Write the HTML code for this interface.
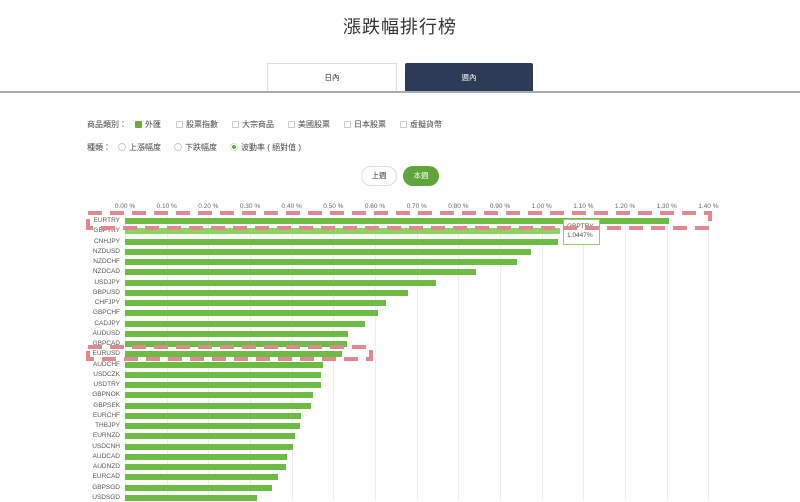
<!DOCTYPE html>
<html><head><meta charset="utf-8"><style>
*{margin:0;padding:0;box-sizing:border-box}
body{width:800px;height:500px;overflow:hidden;background:#fff;position:relative;font-family:"Liberation Sans","Noto Sans CJK TC",sans-serif;color:#444}
.a{position:absolute}
.lbl{position:absolute;left:70px;width:50px;text-align:right;font-size:6.5px;color:#555;line-height:8px}
.bar{position:absolute;left:125px;height:6px;background:#6dbb45}
.g{position:absolute;top:212px;bottom:0;width:1px;background:#eee}
.ax{position:absolute;top:203px;font-size:6.5px;color:#666;width:40px;text-align:center}
.f{font-size:8px;color:#444;line-height:10px}
.cb{display:inline-block;width:7px;height:7px;border:1px solid #ccc;border-radius:1px;vertical-align:-1px;margin-right:3px}
.rd{display:inline-block;width:8px;height:8px;border:1px solid #ccc;border-radius:50%;vertical-align:-1px;margin-right:3px}
</style></head><body>
<div class="a" style="left:0;width:800px;top:13px;text-align:center;font-size:18px;color:#333;letter-spacing:1px">漲跌幅排行榜</div>
<div class="a" style="left:267px;top:63px;width:130px;height:29px;border:1px solid #ddd;border-bottom:none;text-align:center;font-size:7.5px;line-height:28px;color:#333">日內</div>
<div class="a" style="left:405px;top:63px;width:128px;height:29px;background:#2e3b56;border-radius:2px 2px 0 0;text-align:center;font-size:7.5px;line-height:29px;color:#fff">週內</div>
<div class="a" style="left:0;top:91px;width:800px;height:2px;background:#a8acb0"></div>

<div class="a f" style="left:87px;top:120px">商品類別：</div>
<div class="a f" style="left:135px;top:120px"><span class="cb" style="background:#6aab3a;border-color:#6aab3a;position:relative"></span>外匯</div>
<div class="a f" style="left:176px;top:120px"><span class="cb"></span>股票指數</div>
<div class="a f" style="left:232px;top:120px"><span class="cb"></span>大宗商品</div>
<div class="a f" style="left:288px;top:120px"><span class="cb"></span>美國股票</div>
<div class="a f" style="left:344px;top:120px"><span class="cb"></span>日本股票</div>
<div class="a f" style="left:400px;top:120px"><span class="cb"></span>虛擬貨幣</div>
<div class="a f" style="left:87px;top:143px">種類：</div>
<div class="a f" style="left:118px;top:143px"><span class="rd"></span>上漲幅度</div>
<div class="a f" style="left:174px;top:143px"><span class="rd"></span>下跌幅度</div>
<div class="a f" style="left:230px;top:143px"><span class="rd" style="border-color:#ddd;background:radial-gradient(circle,#6aab3a 45%,#fff 50%)"></span>波動率 ( 絕對值 )</div>
<div class="a" style="left:361px;top:166px;width:36px;height:20px;border:1px solid #ddd;border-radius:10px;text-align:center;font-size:7.5px;line-height:18px;color:#333">上週</div>
<div class="a" style="left:403px;top:166px;width:36px;height:20px;background:#5fa53a;border-radius:10px;text-align:center;font-size:7.5px;line-height:20px;color:#fff">本週</div>

<div id="chart"></div>
<div class="a" style="left:563px;top:219px;width:37px;height:26px;border:1px solid #8fcc70;background:#fff;font-size:6.5px;color:#555;padding:2px 3px;line-height:9px">GBPTRY<br>1.0447%</div>
<svg class="a" style="left:0;top:0" width="800" height="500">
<rect x="88" y="213" width="622" height="15" fill="none" stroke="#e08890" stroke-width="4" stroke-dasharray="14,8"/>
<rect x="88" y="347" width="283" height="12" fill="none" stroke="#e08890" stroke-width="4" stroke-dasharray="14,8"/>
</svg>
<script>
var c=document.getElementById('chart'),h='';
for(var i=0;i<=14;i++){var x=125+i*41.67;h+='<div class="g" style="left:'+x+'px"></div><div class="ax" style="left:'+(x-20)+'px">'+(i/10).toFixed(2)+' %</div>';}
var d=[["EURTRY",669],["GBPTRY",560],["CNHJPY",558],["NZDUSD",531],["NZDCHF",517],["NZDCAD",476],["USDJPY",436],["GBPUSD",408],["CHFJPY",386],["GBPCHF",378],["CADJPY",365],["AUDUSD",348],["GBPCAD",347],["EURUSD",342],["AUDCHF",323],["USDCZK",321],["USDTRY",321],["GBPNOK",313],["GBPSEK",311],["EURCHF",301],["THBJPY",300],["EURNZD",295],["USDCNH",293],["AUDCAD",287],["AUDNZD",286],["EURCAD",278],["GBPSGD",272],["USDSGD",257]];
for(var i=0;i<d.length;i++){var y=221+i*10.25;h+='<div class="lbl" style="top:'+(y-4)+'px">'+d[i][0]+'</div><div class="bar" style="top:'+(y-3)+'px;width:'+(d[i][1]-125)+'px'+(i==1?';background:#8cd35f':'')+'"></div>';}
c.innerHTML=h;
</script>
</body></html>
